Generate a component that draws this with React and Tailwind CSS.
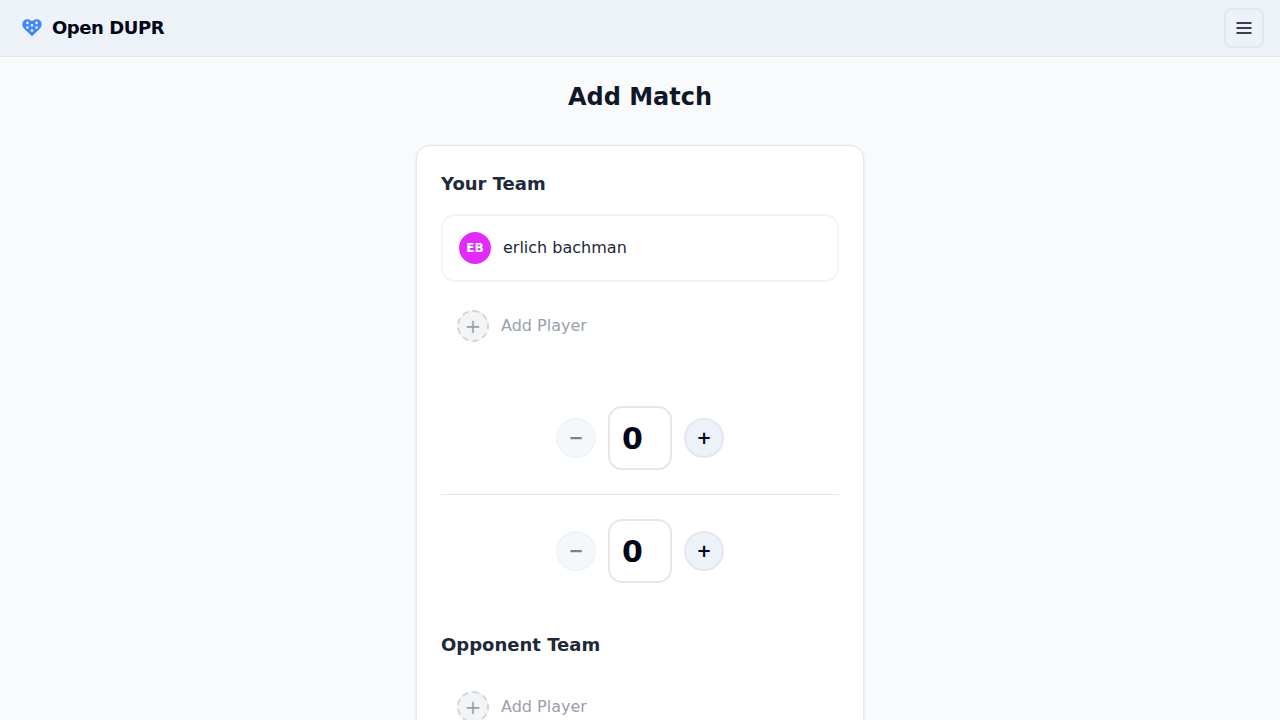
import { useState } from "react";

function Logo() {
  return (
    <svg viewBox="0 0 24 24" className="size-6" aria-hidden="true">
      <path
        d="M12 20.2 4 12.5C1.900 10.300 1.700 6.700 3.800 4.800 6.100 2.600 9.700 2.900 12 5.300 14.300 2.900 17.900 2.600 20.200 4.800 22.300 6.700 22.100 10.300 20 12.500Z"
        fill="#4287fa"
      />
      <g fill="#edf2fa">
        <circle cx="7.400" cy="6.900" r="1.300" />
        <circle cx="16.600" cy="6.900" r="1.300" />
        <circle cx="12" cy="9.300" r="1.300" />
        <circle cx="7.400" cy="11.500" r="1.300" />
        <circle cx="16.600" cy="11.500" r="1.300" />
        <circle cx="12" cy="14.600" r="1.300" />
      </g>
    </svg>
  );
}

function AddPlayer() {
  return (
    <button type="button" className="flex w-full items-center gap-3 rounded-xl p-4 text-left text-gray-400">
      <span className="flex size-8 items-center justify-center rounded-full border-2 border-dashed border-gray-300 bg-gray-100 text-xl leading-7">
        +
      </span>
      <span>Add Player</span>
    </button>
  );
}

const roundButton =
  "flex size-10 items-center justify-center rounded-full border-2 border-slate-200 bg-[#edf2f9] text-lg leading-7 font-bold text-[#020618] disabled:opacity-50";

function Score({ label }) {
  const [score, setScore] = useState(0);
  return (
    <div className="flex items-center justify-center gap-3">
      <button
        type="button"
        aria-label={`Decrease ${label}`}
        disabled={score === 0}
        onClick={() => setScore(score - 1)}
        className={roundButton}
      >
        −
      </button>
      <input
        type="text"
        inputMode="numeric"
        aria-label={label}
        value={score}
        onChange={(e) => setScore(Number(e.target.value.replace(/\D/g, "")))}
        className="size-16 rounded-[14px] border-2 border-[#e5e7eb] bg-white px-3 text-3xl font-bold text-[#020618]"
      />
      <button
        type="button"
        aria-label={`Increase ${label}`}
        onClick={() => setScore(score + 1)}
        className={roundButton}
      >
        +
      </button>
    </div>
  );
}

export default function App() {
  return (
    <div className="min-h-screen bg-[#f9fafc] font-['DejaVu_Sans',sans-serif] text-[#020618]">
      <header className="flex h-[57px] items-center justify-between border-b border-slate-200 bg-[#edf2f9] pr-4 pl-5">
        <a href="#home" className="flex items-center gap-2 text-lg font-bold tracking-tight">
          <Logo />
          Open DUPR
        </a>
        <button
          type="button"
          aria-label="Menu"
          className="flex size-10 items-center justify-center rounded-lg border-2 border-slate-200 text-[#3e3c50]"
        >
          <svg viewBox="0 0 16 12" className="h-3 w-4" fill="none" stroke="currentColor" strokeWidth="2" strokeLinecap="butt">
            <path d="M.5 1h15M.5 6h15M.5 11h15" />
          </svg>
        </button>
      </header>
      <main className="mx-auto max-w-md py-6">
        <h1 className="mb-8 text-center text-2xl font-bold text-gray-900">Add Match</h1>
        <div className="rounded-[14px] border border-slate-200 bg-white p-6 shadow-sm">
          <section>
            <h2 className="mb-4 text-lg font-semibold text-gray-800">Your Team</h2>
            <div className="space-y-3">
              <div className="flex items-center gap-3 rounded-[14px] border-2 border-gray-100 p-4">
                <span className="flex size-8 items-center justify-center rounded-full bg-[#e12afb] text-xs font-bold text-white">
                  EB
                </span>
                <span className="text-gray-800">erlich bachman</span>
              </div>
              <AddPlayer />
            </div>
          </section>
          <div className="my-12">
            <Score label="your team score" />
            <hr className="my-6 border-gray-200" />
            <Score label="opponent team score" />
          </div>
          <section>
            <h2 className="mb-4 text-lg font-semibold text-gray-800">Opponent Team</h2>
            <AddPlayer />
          </section>
        </div>
      </main>
    </div>
  );
}
